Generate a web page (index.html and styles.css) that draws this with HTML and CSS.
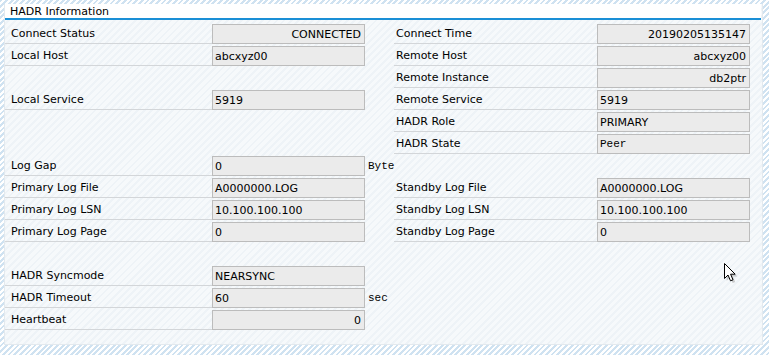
FILE: index.html
```html
<!DOCTYPE html>
<html lang="en">
<head>
    <meta charset="UTF-8">
    <title>HADR Information</title>
    <link rel="stylesheet" href="styles.css">
</head>
<body>

<div class="panel">
    <div class="title">HADR Information</div>

    <div class="rows">
        <div class="row">
            <span class="label">Connect Status</span>
            <span class="field right">CONNECTED</span>
            <span></span>
            <span class="label r">Connect Time</span>
            <span class="field right">20190205135147</span>
        </div>
        <div class="row">
            <span class="label">Local Host</span>
            <span class="field">abcxyz00</span>
            <span></span>
            <span class="label r">Remote Host</span>
            <span class="field right">abcxyz00</span>
        </div>
        <div class="row">
            <span></span>
            <span></span>
            <span></span>
            <span class="label r">Remote Instance</span>
            <span class="field right">db2ptr</span>
        </div>
        <div class="row">
            <span class="label">Local Service</span>
            <span class="field">5919</span>
            <span></span>
            <span class="label r">Remote Service</span>
            <span class="field">5919</span>
        </div>
        <div class="row">
            <span></span>
            <span></span>
            <span></span>
            <span class="label r">HADR Role</span>
            <span class="field">PRIMARY</span>
        </div>
        <div class="row">
            <span></span>
            <span></span>
            <span></span>
            <span class="label r">HADR State</span>
            <span class="field mono">Peer</span>
        </div>
        <div class="row">
            <span class="label">Log Gap</span>
            <span class="field">0</span>
            <span class="unit">Byte</span>
            <span></span>
            <span></span>
        </div>
        <div class="row">
            <span class="label">Primary Log File</span>
            <span class="field">A0000000.LOG</span>
            <span></span>
            <span class="label r">Standby Log File</span>
            <span class="field">A0000000.LOG</span>
        </div>
        <div class="row">
            <span class="label">Primary Log LSN</span>
            <span class="field">10.100.100.100</span>
            <span></span>
            <span class="label r">Standby Log LSN</span>
            <span class="field">10.100.100.100</span>
        </div>
        <div class="row">
            <span class="label">Primary Log Page</span>
            <span class="field">0</span>
            <span></span>
            <span class="label r">Standby Log Page</span>
            <span class="field">0</span>
        </div>
        <div class="row"></div>
        <div class="row">
            <span class="label">HADR Syncmode</span>
            <span class="field">NEARSYNC</span>
            <span></span>
            <span></span>
            <span></span>
        </div>
        <div class="row">
            <span class="label">HADR Timeout</span>
            <span class="field">60</span>
            <span class="unit">sec</span>
            <span></span>
            <span></span>
        </div>
        <div class="row">
            <span class="label">Heartbeat</span>
            <span class="field right">0</span>
            <span></span>
            <span></span>
            <span></span>
        </div>
    </div>

    <!-- mouse pointer -->
    <svg class="cursor" width="16" height="22" viewBox="0 0 16 22">
        <path d="M2.5 2.5 L2.5 17.5 L6 14 L8.5 19.8 L11 18.8 L8.6 13.2 L13.2 13.2 Z" fill="#999" opacity="0.5" transform="translate(1.2,1.2)"/>
        <path d="M1.5 1.5 L1.5 16.5 L5 13 L7.5 18.8 L10 17.8 L7.6 12.2 L12.2 12.2 Z" fill="#fff" stroke="#000" stroke-width="1" stroke-linejoin="miter"/>
    </svg>
</div>

</body>
</html>
```

FILE: styles.css
```css
body {
    margin: 0;
    width: 769px;
    height: 355px;
    overflow: hidden;
    font-family: "DejaVu Sans", "Liberation Sans", sans-serif;
    font-size: 11px;
    color: #000;
    background: repeating-linear-gradient(135deg, #cfe2f1 0, #cfe2f1 2px, #ffffff 2px, #ffffff 4px);
}

.panel {
    position: relative;
    box-sizing: border-box;
    width: 759px;
    height: 341px;
    margin: 4px 0 0 4px;
    border: 1px solid #e3e9ee;
    border-top: none;
    background: #f4f7fa repeating-linear-gradient(135deg, #f6f9fb 0, #f6f9fb 3px, #eef3f7 3px, #eef3f7 5px);
}

.title {
    height: 14px;
    line-height: 15px;
    padding-left: 5px;
    background: #fff;
    border-bottom: 2px solid #1a8fd6;
    margin-right: 1px;
}

.rows {
    display: flex;
    flex-direction: column;
    gap: 2px;
    padding-top: 4px;
}

.row {
    display: grid;
    grid-template-columns: 207px 153px 29px 203px 153px;
    height: 20px;
}

.label {
    box-sizing: border-box;
    height: 20px;
    line-height: 20px;
    padding-left: 6px;
    border-bottom: 1px solid #d3d6d9;
    white-space: nowrap;
}

.label.r {
    padding-left: 2px;
}

.field {
    box-sizing: border-box;
    height: 20px;
    line-height: 19px;
    padding: 0 3px 0 2px;
    background: #ebebeb;
    border: 1px solid #bcbcbc;
    white-space: nowrap;
}

.right {
    text-align: right;
}

.mono,
.unit {
    font-family: "Liberation Mono", "DejaVu Sans Mono", monospace;
    font-size: 11px;
}

.unit {
    line-height: 20px;
    padding-left: 3px;
}

.cursor {
    position: absolute;
    left: 718px;
    top: 258px;
}
```
